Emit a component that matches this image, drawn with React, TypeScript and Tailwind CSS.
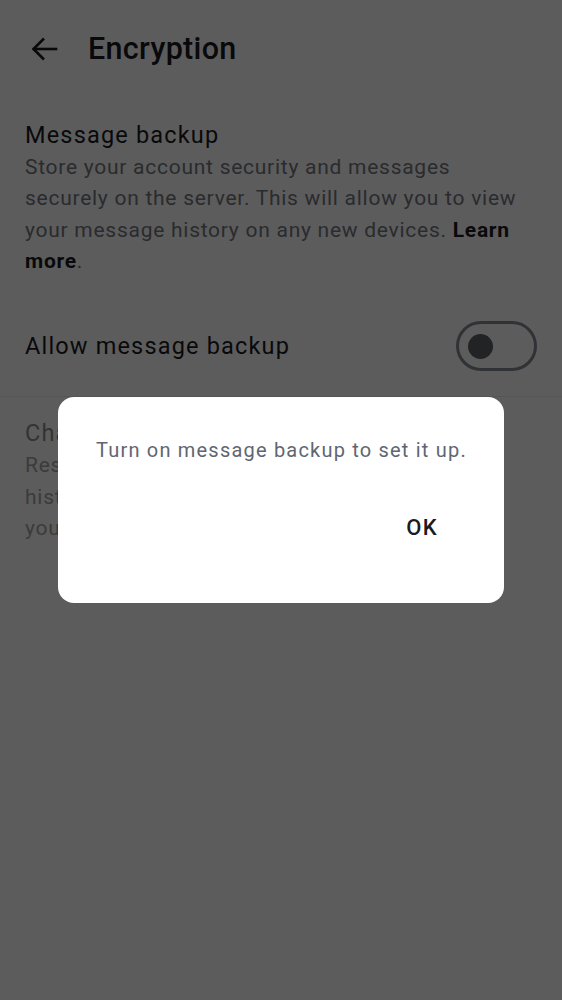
import React from 'react';

function BackArrow() {
  return (
    <svg width="28" height="28" viewBox="0 0 28 28" fill="none" stroke="#1b1b1f" strokeWidth="2.6" strokeLinecap="square">
      <path d="M4 14h22" />
      <path d="M14 3.5L3.5 14L14 24.5" strokeLinecap="butt" />
    </svg>
  );
}

function Toggle() {
  return (
    <div className="w-[81px] h-[50px] rounded-full border-[3px] border-[#868a92] flex items-center pl-[9px]">
      <div className="w-[25px] h-[25px] rounded-full bg-[#5e6268]" />
    </div>
  );
}

function Section({ title, muted, children }: { title: string; muted?: boolean; children: React.ReactNode }) {
  return (
    <div className="px-[25px]">
      <div className={`text-[23.5px] leading-[34px] tracking-[0.05em] ${muted ? 'text-[#8e8e8e]' : 'text-[#1b1b1f]'}`}>{title}</div>
      <div className={`text-[21px] leading-[31.33px] tracking-[0.035em] ${muted ? 'text-[#a5a5a5]' : 'text-[#75787f]'}`}>{children}</div>
    </div>
  );
}

export default function App() {
  return (
    <div className="relative w-[562px] h-[1000px] overflow-hidden bg-white" style={{ fontFamily: 'Roboto, "Noto Sans", sans-serif' }}>
      {/* page */}
      <div className="flex flex-col">
        <div className="h-[98px] flex items-center pl-[30px]">
          <BackArrow />
          <span className="ml-[30px] text-[30.5px] text-[#1b1b1f] font-medium tracking-[0.01em]">Encryption</span>
        </div>

        <div className="pt-[20px]">
          <Section title="Message backup">
            Store your account security and messages securely on the server. This will allow you to view your message history on any new devices. <b className="text-[#1b1b1f] font-bold">Learn more</b>.
          </Section>
        </div>

        <div className="h-[119px] flex items-center justify-between pl-[25px] pr-[25px] pt-[19px]">
          <span className="text-[23.5px] tracking-[0.05em] text-[#1b1b1f]">Allow message backup</span>
          <Toggle />
        </div>

        <div className="h-px bg-[#ececec]" />

        <div className="pt-[19px]">
          <Section title="Change recovery key" muted>
            Reset your recovery key to keep your message<br />
            history safe. Make sure you save the new key<br />
            you get somewhere safe.
          </Section>
        </div>
      </div>

      {/* scrim */}
      <div className="absolute inset-0 bg-black/[0.64] flex justify-center">
        <div className="mt-[397px] w-[446px] h-[206px] bg-white rounded-[16px] pt-[38px] pl-[38px]">
          <div className="text-[20px] leading-[30px] text-[#5f6672] tracking-[0.06em] whitespace-nowrap">Turn on message backup to set it up.</div>
          <div className="flex justify-end mt-[48px] pr-[66px]">
            <span className="text-[22px] leading-[30px] font-medium text-[#1b1b1f] tracking-[0.06em]">OK</span>
          </div>
        </div>
      </div>
    </div>
  );
}
